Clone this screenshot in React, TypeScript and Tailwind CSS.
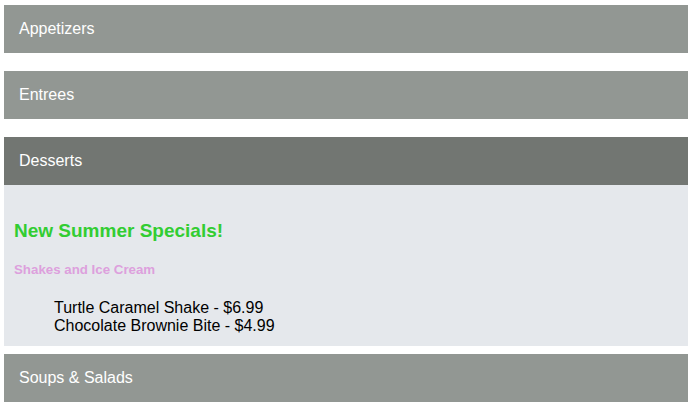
const sections = [
  { title: "Appetizers", open: false },
  { title: "Entrees", open: false },
  { title: "Desserts", open: true },
  { title: "Soups & Salads", open: false },
];

const items = ["Turtle Caramel Shake - $6.99", "Chocolate Brownie Bite - $4.99"];

export default function App() {
  return (
    <div
      className="min-h-screen bg-white pt-[5px] pl-[4px]"
      style={{ fontFamily: '"Liberation Sans", Arial, sans-serif' }}
    >
      <div className="flex w-[684px] flex-col">
        {sections.map((s) =>
          s.open ? (
            <div key={s.title} className="mb-[8px]">
              <div className="flex h-12 items-center bg-[#727672] px-[15px] text-base leading-[18px] text-white">
                {s.title}
              </div>
              <div className="h-[161px] bg-[#e5e8ec] px-[10px] pt-[34px]">
                <h2 className="text-[19px] leading-[23px] font-bold text-[#32cd32]">
                  New Summer Specials!
                </h2>
                <h5 className="mt-[20px] text-[13.3px] leading-[15px] font-bold text-[#dda0dd]">
                  Shakes and Ice Cream
                </h5>
                <ul className="mt-[22px] pl-[40px] text-base leading-[18px] text-black">
                  {items.map((it) => (
                    <li key={it}>{it}</li>
                  ))}
                </ul>
              </div>
            </div>
          ) : (
            <div
              key={s.title}
              className="mb-[18px] flex h-12 items-center bg-[#929793] px-[15px] text-base leading-[18px] text-white"
            >
              {s.title}
            </div>
          )
        )}
      </div>
    </div>
  );
}
